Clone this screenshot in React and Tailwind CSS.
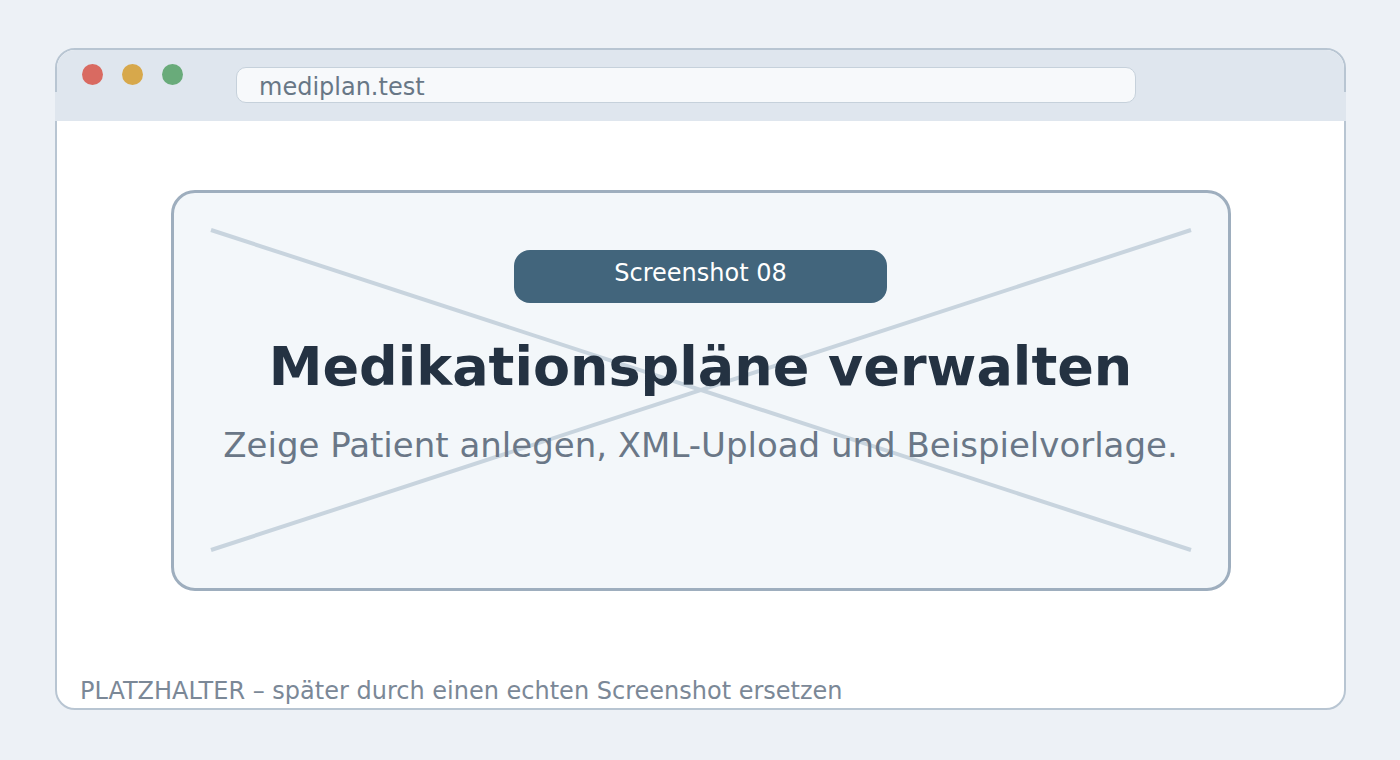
const font = { fontFamily: '"DejaVu Sans", Verdana, sans-serif' }

function TrafficLights() {
  return (
    <div className="flex items-center gap-[19px] pl-[25px] mt-[14px]">
      <span className="block w-[21px] h-[21px] rounded-full bg-[#d96a61]" />
      <span className="block w-[21px] h-[21px] rounded-full bg-[#d7a84b]" />
      <span className="block w-[21px] h-[21px] rounded-full bg-[#69ab7a]" />
    </div>
  )
}

function Cross() {
  return (
    <svg className="absolute inset-0 w-full h-full" viewBox="0 0 1054 395" preserveAspectRatio="none">
      <line x1="37" y1="37" x2="1017" y2="357" stroke="#c8d4de" strokeWidth="4" />
      <line x1="37" y1="357" x2="1017" y2="37" stroke="#c8d4de" strokeWidth="4" />
    </svg>
  )
}

export default function App() {
  return (
    <div className="min-h-[760px] w-[1400px] bg-[#edf1f6] pt-[48px] pl-[55px]" style={font}>
      <div className="w-[1291px] h-[662px] border-2 border-[#b8c5d2] rounded-[20px] bg-white flex flex-col">
        {/* header */}
        <div className="bg-[#dfe6ee] rounded-t-[18px] h-[42px] flex items-start">
          <TrafficLights />
          <div className="relative ml-[53px] mt-[17px] w-[900px] h-[36px] rounded-[10px] border-[1.5px] border-[#c6d1db] bg-[#f7f9fb] pl-[22px] pt-[4px] text-[24px] leading-[30px] text-[#687786]">
            mediplan.test
          </div>
        </div>
        <div className="bg-[#dfe6ee] h-[29px] -mx-[2px]" />

        {/* body */}
        <div className="flex-1 flex flex-col">
          <div className="mt-[69px] mx-auto w-[1060px] h-[401px] border-[3px] border-[#9eaebe] rounded-[24px] bg-[#f3f7fa] relative">
            <Cross />
            <div className="relative flex flex-col items-center pt-[57px]">
              <div className="w-[373px] h-[53px] rounded-[16px] bg-[#42657c] text-white text-[24px] leading-[47px] text-center">
                Screenshot 08
              </div>
              <h1 className="mt-[32px] text-[54px] leading-[64px] font-bold text-[#243242]">
                Medikationspläne verwalten
              </h1>
              <p className="mt-[25px] text-[34px] leading-[42px] text-[#6a7787]">
                Zeige Patient anlegen, XML-Upload und Beispielvorlage.
              </p>
            </div>
          </div>
          <div className="mt-auto pl-[23px] pb-[4px] text-[24px] leading-[26px] text-[#7b8897]">
            PLATZHALTER – später durch einen echten Screenshot ersetzen
          </div>
        </div>
      </div>
    </div>
  )
}
